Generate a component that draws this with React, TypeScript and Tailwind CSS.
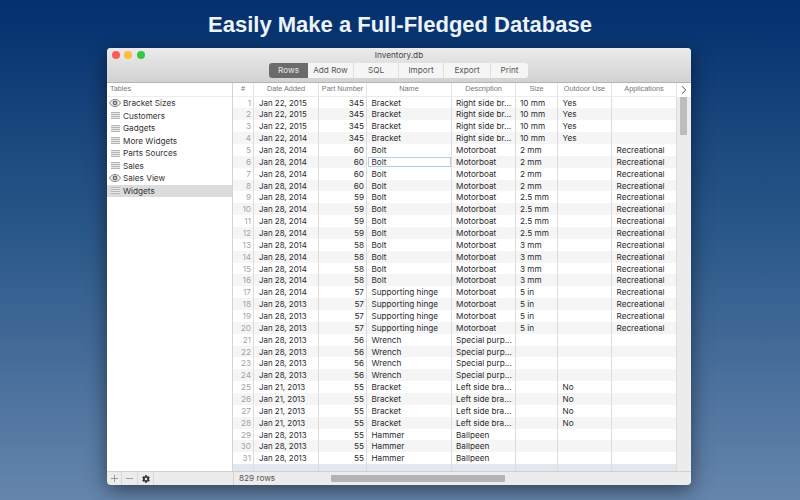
import { ChevronRight, Minus, Plus } from "lucide-react";
import { FaCog } from "react-icons/fa";

const tables = [
  { name: "Bracket Sizes", view: true },
  { name: "Customers", view: false },
  { name: "Gadgets", view: false },
  { name: "More Widgets", view: false },
  { name: "Parts Sources", view: false },
  { name: "Sales", view: false },
  { name: "Sales View", view: true },
  { name: "Widgets", view: false },
];

const tabs = [
  { label: "Rows", width: "w-[39px]" },
  { label: "Add Row", width: "w-[46px]" },
  { label: "SQL", width: "w-[45px]" },
  { label: "Import", width: "w-[45px]" },
  { label: "Export", width: "w-[47px]" },
  { label: "Print", width: "w-[37px]" },
];

const columns = ["#", "Date Added", "Part Number", "Name", "Description", "Size", "Outdoor Use", "Applications"];

const R = "Right side br...";
const L = "Left side bra...";
const S = "Special purp...";
const M = "Motorboat";
const A = "Recreational";

type Row = [string, number, string, string, string, string, string];

const rows: Row[] = [
  ["Jan 22, 2015", 345, "Bracket", R, "10 mm", "Yes", ""],
  ["Jan 22, 2015", 345, "Bracket", R, "10 mm", "Yes", ""],
  ["Jan 22, 2015", 345, "Bracket", R, "10 mm", "Yes", ""],
  ["Jan 22, 2014", 345, "Bracket", R, "10 mm", "Yes", ""],
  ["Jan 28, 2014", 60, "Bolt", M, "2 mm", "", A],
  ["Jan 28, 2014", 60, "Bolt", M, "2 mm", "", A],
  ["Jan 28, 2014", 60, "Bolt", M, "2 mm", "", A],
  ["Jan 28, 2014", 60, "Bolt", M, "2 mm", "", A],
  ["Jan 28, 2014", 59, "Bolt", M, "2.5 mm", "", A],
  ["Jan 28, 2014", 59, "Bolt", M, "2.5 mm", "", A],
  ["Jan 28, 2014", 59, "Bolt", M, "2.5 mm", "", A],
  ["Jan 28, 2014", 59, "Bolt", M, "2.5 mm", "", A],
  ["Jan 28, 2014", 58, "Bolt", M, "3 mm", "", A],
  ["Jan 28, 2014", 58, "Bolt", M, "3 mm", "", A],
  ["Jan 28, 2014", 58, "Bolt", M, "3 mm", "", A],
  ["Jan 28, 2014", 58, "Bolt", M, "3 mm", "", A],
  ["Jan 28, 2014", 57, "Supporting hinge", M, "5 in", "", A],
  ["Jan 28, 2013", 57, "Supporting hinge", M, "5 in", "", A],
  ["Jan 28, 2013", 57, "Supporting hinge", M, "5 in", "", A],
  ["Jan 28, 2013", 57, "Supporting hinge", M, "5 in", "", A],
  ["Jan 28, 2013", 56, "Wrench", S, "", "", ""],
  ["Jan 28, 2013", 56, "Wrench", S, "", "", ""],
  ["Jan 28, 2013", 56, "Wrench", S, "", "", ""],
  ["Jan 28, 2013", 56, "Wrench", S, "", "", ""],
  ["Jan 21, 2013", 55, "Bracket", L, "", "No", ""],
  ["Jan 21, 2013", 55, "Bracket", L, "", "No", ""],
  ["Jan 21, 2013", 55, "Bracket", L, "", "No", ""],
  ["Jan 21, 2013", 55, "Bracket", L, "", "No", ""],
  ["Jan 28, 2013", 55, "Hammer", "Ballpeen", "", "", ""],
  ["Jan 28, 2013", 55, "Hammer", "Ballpeen", "", "", ""],
  ["Jan 28, 2013", 55, "Hammer", "Ballpeen", "", "", ""],
];

const gridCols = "grid grid-cols-[21px_65px_48px_85px_64px_42px_54px_65px]";
const cell = "border-r border-[#dcdcdc] overflow-hidden whitespace-nowrap";

function EyeIcon() {
  return (
    <svg width="12" height="8" viewBox="0 0 12 8">
      <path d="M0.5 4C2 1.5 4 0.4 6 0.4S10 1.5 11.5 4C10 6.5 8 7.6 6 7.6S2 6.5 0.5 4Z" fill="#f0f0f0" stroke="#777" strokeWidth="0.9" />
      <circle cx="6" cy="4" r="2.4" fill="#6f6f6f" />
      <circle cx="6" cy="4" r="0.9" fill="#e8e8e8" />
    </svg>
  );
}

function TableIcon() {
  return (
    <svg width="9" height="7" viewBox="0 0 9 7">
      <rect width="9" height="7" fill="#e8e8e8" />
      <path d="M0 0.5H9M0 2.5H9M0 4.5H9M0 6.5H9" stroke="#a8a8a8" strokeWidth="0.8" />
    </svg>
  );
}

function Sidebar() {
  return (
    <div className="w-[127px] flex flex-col border-r border-[#d4d4d4] bg-white">
      <div className="h-[13.5px] pl-[3px] flex items-center text-[7.3px] text-[#777] border-b border-[#ececec]">Tables</div>
      <div className="pt-[0.5px] flex flex-col">
        {tables.map((t) => (
          <div
            key={t.name}
            className={`h-[12.5px] flex items-center gap-[2px] font-['Inter',sans-serif] text-[8.2px] text-[#333] ${t.name === "Widgets" ? "bg-[#dcdcdc]" : ""}`}
          >
            <span className="w-[12px] ml-[2px] flex justify-center shrink-0">{t.view ? <EyeIcon /> : <TableIcon />}</span>
            {t.name}
          </div>
        ))}
      </div>
    </div>
  );
}

function DataTable() {
  return (
    <div className="w-[444px] flex flex-col bg-white">
      <div className={`${gridCols} h-[13.5px] border-b border-[#ececec] text-[7.3px] text-[#777]`}>
        {columns.map((c) => (
          <div key={c} className="flex items-center justify-center border-r border-[#e4e4e4] whitespace-nowrap">
            {c}
          </div>
        ))}
      </div>
      <div className="flex-1 flex flex-col font-['Inter',sans-serif] text-[8.2px] leading-[13px] text-[#2c2c2c] bg-[#e1e8ef]">
        {rows.map((r, i) => (
          <div key={i} className={`${gridCols} h-[11.87px] ${i % 2 ? "bg-[#f5f5f5]" : "bg-white"}`}>
            <div className={`${cell} text-right pr-[2px] text-[#a3a3a3]`}>{i + 1}</div>
            <div className={`${cell} pl-[5px] text-[7.9px]`}>{r[0]}</div>
            <div className={`${cell} text-right pr-[2px]`}>{r[1]}</div>
            <div className={`${cell} pl-[4.5px] ${i === 5 ? "bg-white outline outline-1 -outline-offset-2 outline-[#b5cdec]" : ""}`}>{r[2]}</div>
            <div className={`${cell} pl-[4px]`}>{r[3]}</div>
            <div className={`${cell} pl-[4px]`}>{r[4]}</div>
            <div className={`${cell} pl-[4.5px]`}>{r[5]}</div>
            <div className={`${cell} pl-[4.5px]`}>{r[6]}</div>
          </div>
        ))}
        <div className={`${gridCols} flex-1`}>
          {columns.map((c) => (
            <div key={c} className="border-r border-[#dcdcdc]" />
          ))}
        </div>
      </div>
    </div>
  );
}

export default function App() {
  return (
    <div className="w-[800px] h-[500px] overflow-hidden bg-gradient-to-b from-[#03306e] via-[#2d5a8b] to-[#6585ac] font-['Liberation_Sans',sans-serif]">
      <h1 className="h-[48px] flex items-center justify-center text-[22px] font-bold text-[#eef3f8]">
        Easily Make a Full-Fledged Database
      </h1>
      <div className="ml-[107px] w-[584px] h-[437px] flex flex-col rounded-[4px] overflow-hidden bg-[#ececec] shadow-[0_5px_20px_rgba(0,0,0,0.5)]">
        <div className="h-[35px] flex flex-col bg-gradient-to-b from-[#ebebeb] to-[#d2d2d2] border-b border-[#b4b4b4]">
          <div className="relative h-[14.5px] flex items-center justify-center font-['Inter',sans-serif] text-[8.2px] text-[#444]">
            <div className="absolute left-[4.5px] top-[2.5px] flex gap-[4.5px]">
              <span className="w-[8px] h-[8px] rounded-full bg-[#fc5b57]" />
              <span className="w-[8px] h-[8px] rounded-full bg-[#fdbc40]" />
              <span className="w-[8px] h-[8px] rounded-full bg-[#34c748]" />
            </div>
            Inventory.db
          </div>
          <div className="ml-[162px] flex h-[15px] w-fit rounded-[3px] overflow-hidden bg-[#f5f5f5] font-['Inter',sans-serif] text-[8.2px] text-[#555]">
            {tabs.map((t, i) => (
              <div
                key={t.label}
                className={`${t.width} flex items-center justify-center ${i === 0 ? "bg-[#6b6b6b] text-[#e8e8e8]" : "border-r border-[#dedede] last:border-r-0"}`}
              >
                {t.label}
              </div>
            ))}
          </div>
        </div>
        <div className="flex flex-1 min-h-0">
          <Sidebar />
          <DataTable />
          <div className="flex-1 flex flex-col bg-[#ececec]">
            <div className="h-[13.5px] bg-white flex items-center justify-center text-[#333]">
              <ChevronRight size={14} strokeWidth={1.5} />
            </div>
            <div className="ml-[3px] w-[7px] h-[38px] bg-[#bdbdbd]" />
          </div>
        </div>
        <div className="h-[14px] flex items-center border-t border-[#d0d0d0] font-['Inter',sans-serif] text-[8.2px] text-[#555]">
          <div className="w-[127px] h-full flex border-r border-[#d4d4d4]">
            <div className="w-[15px] flex items-center justify-center border-r border-[#d8d8d8] text-[#777]">
              <Plus size={11} strokeWidth={1.4} />
            </div>
            <div className="w-[16px] flex items-center justify-center border-r border-[#d8d8d8] text-[#777]">
              <Minus size={11} strokeWidth={1.4} />
            </div>
            <div className="w-[16px] flex items-center justify-center border-r border-[#d8d8d8] text-[#333]">
              <FaCog size={8} />
            </div>
          </div>
          <span className="ml-[5px] w-[92px]">829 rows</span>
          <div className="w-[174px] h-[7px] rounded-[1px] bg-[#b3b3b3]" />
        </div>
      </div>
    </div>
  );
}
